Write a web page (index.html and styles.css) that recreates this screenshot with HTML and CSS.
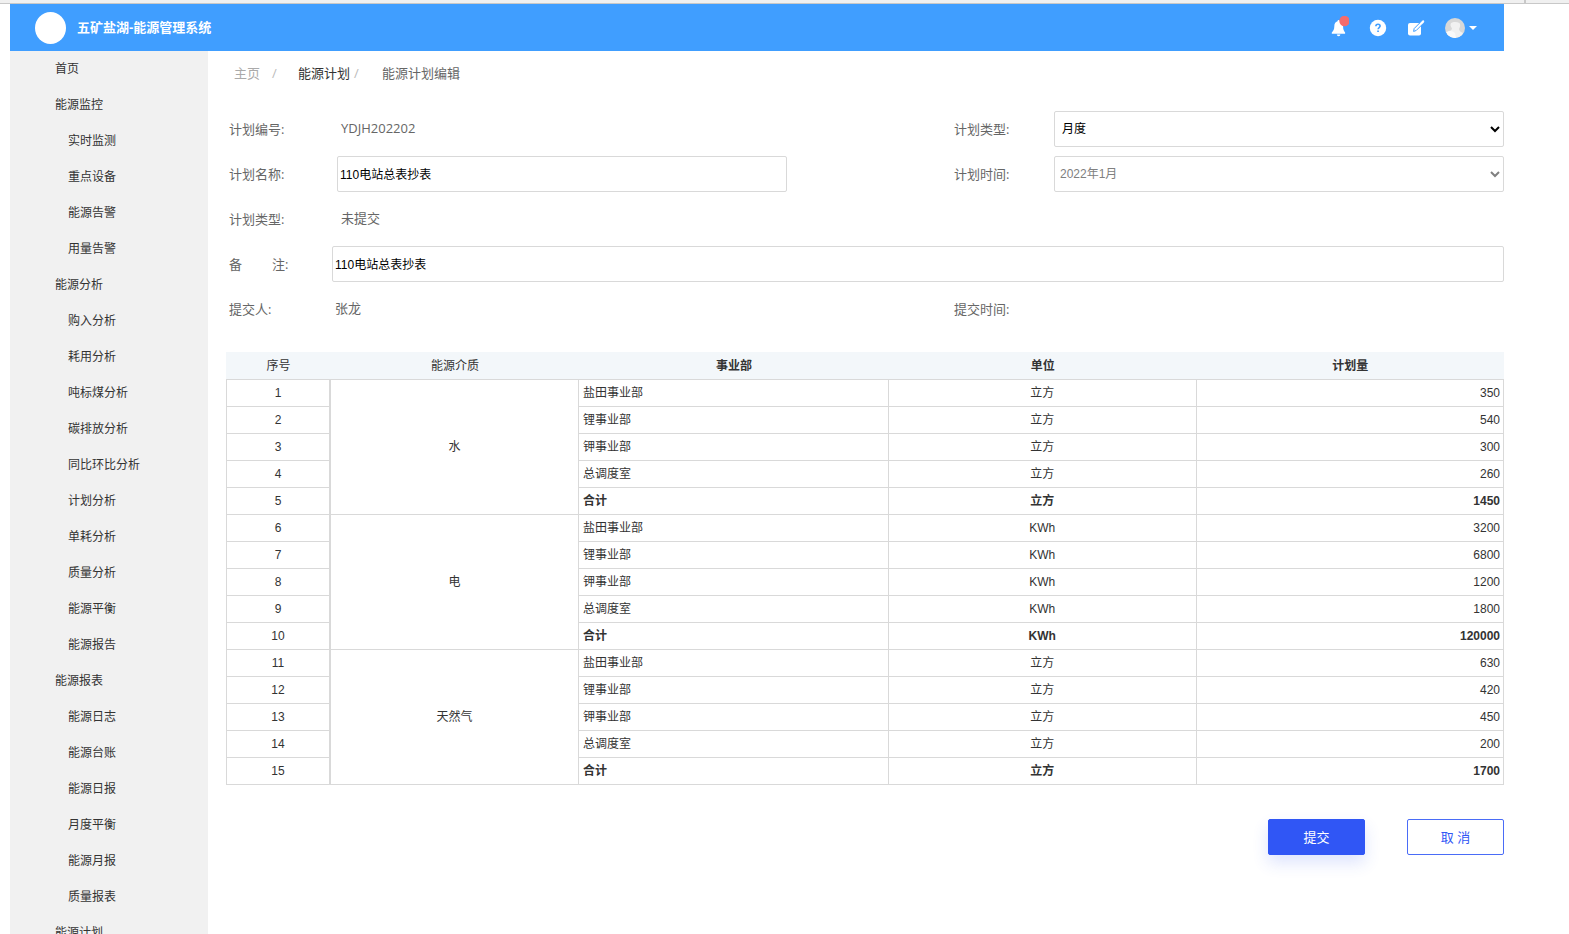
FILE: index.html
```html
<!DOCTYPE html>
<html lang="zh-CN">
<head>
<meta charset="utf-8">
<title>五矿盐湖-能源管理系统</title>
<link rel="stylesheet" href="styles.css">
</head>
<body>
<div class="window-edge"><span class="window-notch"></span></div>
<div class="app">
  <header class="topbar">
    <span class="logo"></span>
    <h1 class="brand">五矿盐湖-能源管理系统</h1>
    <div class="tools">
      <button class="tool" type="button" aria-label="通知">
        <svg width="20" height="24" viewBox="0 0 20 24"><path d="M8.500 5.300a1.200 1.200 0 0 1 2.400 0C13.100 5.900 14.100 7.500 14.100 10.500c0 3.200.7 4.300 2 6v1.300H2.800v-1.300c1.500-1.700 2.500-2.800 2.500-6 0-3 1-4.600 3.200-5.200z" fill="#fff"/><path d="M7.800 18.500h3.600a1.800 1.800 0 0 1-3.600 0z" fill="#fff"/><circle cx="15.500" cy="5" r="5.200" fill="#f56c6c"/></svg>
      </button>
      <button class="tool" type="button" aria-label="帮助">
        <svg width="18" height="18" viewBox="0 0 18 18"><circle cx="9" cy="9" r="8.200" fill="#fff"/><path d="M6.900 7.300c0-1.300.9-2 2.100-2s2.100.7 2.100 1.800c0 1.400-2 1.500-2 3.200" fill="none" stroke="#409eff" stroke-width="1.600"/><path d="M8.200 11.500h1.700v1.600H8.200z" fill="#409eff"/></svg>
      </button>
      <button class="tool" type="button" aria-label="编辑">
        <svg width="18" height="18" viewBox="0 0 18 18"><path d="M3 4h8.600L14 6v8.500a2 2 0 0 1-2 2H3a2 2 0 0 1-2-2V6a2 2 0 0 1 2-2z" fill="#fff"/><path d="M6.600 12.400l.6-2.900 8-8 2 2-8 8z" fill="#fff" stroke="#409eff" stroke-width="1"/><path d="M14 4.600L16.800 1.700" stroke="#fff" stroke-width="1.800"/></svg>
      </button>
      <button class="tool user" type="button" aria-label="用户">
        <svg width="20" height="20" viewBox="0 0 20 20"><defs><clipPath id="face"><circle cx="10" cy="10" r="10"/></clipPath></defs><g clip-path="url(#face)"><path d="M0 0h20v20H0z" fill="#d8d8d8"/><path d="M6 5c2-1.500 6-1.500 8.500 0 1.500 2.500.3 4.300-.5 6 0 2 2 3 4 4l-2 5H2l-1-6c3-1 5.500-1 6-3.500C5.700 8.500 5 7 6 5z" fill="#f1f1f1"/><path d="M2 14c3-2 6-1 8 1l1 5H2z" fill="#fafafa"/></g></svg>
        <svg width="8" height="4" viewBox="0 0 8 4"><path d="M0 0h8L4 4z" fill="#fff"/></svg>
      </button>
    </div>
  </header>
  <div class="body">
    <nav class="sidebar">
      <a href="#">首页</a>
      <a href="#">能源监控</a>
      <a class="sub" href="#">实时监测</a>
      <a class="sub" href="#">重点设备</a>
      <a class="sub" href="#">能源告警</a>
      <a class="sub" href="#">用量告警</a>
      <a href="#">能源分析</a>
      <a class="sub" href="#">购入分析</a>
      <a class="sub" href="#">耗用分析</a>
      <a class="sub" href="#">吨标煤分析</a>
      <a class="sub" href="#">碳排放分析</a>
      <a class="sub" href="#">同比环比分析</a>
      <a class="sub" href="#">计划分析</a>
      <a class="sub" href="#">单耗分析</a>
      <a class="sub" href="#">质量分析</a>
      <a class="sub" href="#">能源平衡</a>
      <a class="sub" href="#">能源报告</a>
      <a href="#">能源报表</a>
      <a class="sub" href="#">能源日志</a>
      <a class="sub" href="#">能源台账</a>
      <a class="sub" href="#">能源日报</a>
      <a class="sub" href="#">月度平衡</a>
      <a class="sub" href="#">能源月报</a>
      <a class="sub" href="#">质量报表</a>
      <a href="#">能源计划</a>
    </nav>
    <main class="main">
      <nav class="crumbs">
        <a class="home" href="#">主页</a><span class="slash first">/</span><a class="parent" href="#">能源计划</a><span class="slash">/</span><span class="current">能源计划编辑</span>
      </nav>
      <form class="form">
        <div class="row">
          <span class="label">计划编号:</span><span class="value">YDJH202202</span>
          <label class="label right" for="type">计划类型:</label>
          <select id="type" class="field type"><option>月度</option></select>
        </div>
        <div class="row">
          <label class="label" for="name">计划名称:</label><input id="name" class="field" type="text" value="110电站总表抄表">
          <label class="label right" for="time">计划时间:</label>
          <select id="time" class="field time" disabled><option>2022年1月</option></select>
        </div>
        <div class="row"><span class="label">计划类型:</span><span class="value">未提交</span></div>
        <div class="row wide">
          <label class="label spread" for="note"><span>备</span><span>注:</span></label><input id="note" class="field" type="text" value="110电站总表抄表">
        </div>
        <div class="row"><span class="label">提交人:</span><span class="value person">张龙</span><span class="label right">提交时间:</span></div>
      </form>
      <table class="plan">
        <colgroup><col class="c-no"><col class="c-kind"><col class="c-dept"><col><col></colgroup>
        <thead><tr><th class="light">序号</th><th class="light">能源介质</th><th>事业部</th><th>单位</th><th>计划量</th></tr></thead>
        <tbody>
          <tr><td class="no">1</td><td rowspan="5">水</td><td class="dept">盐田事业部</td><td>立方</td><td class="num">350</td></tr>
          <tr><td class="no">2</td><td class="dept">锂事业部</td><td>立方</td><td class="num">540</td></tr>
          <tr><td class="no">3</td><td class="dept">钾事业部</td><td>立方</td><td class="num">300</td></tr>
          <tr><td class="no">4</td><td class="dept">总调度室</td><td>立方</td><td class="num">260</td></tr>
          <tr class="total"><td class="no">5</td><td class="dept">合计</td><td>立方</td><td class="num">1450</td></tr>
          <tr><td class="no">6</td><td rowspan="5">电</td><td class="dept">盐田事业部</td><td>KWh</td><td class="num">3200</td></tr>
          <tr><td class="no">7</td><td class="dept">锂事业部</td><td>KWh</td><td class="num">6800</td></tr>
          <tr><td class="no">8</td><td class="dept">钾事业部</td><td>KWh</td><td class="num">1200</td></tr>
          <tr><td class="no">9</td><td class="dept">总调度室</td><td>KWh</td><td class="num">1800</td></tr>
          <tr class="total"><td class="no">10</td><td class="dept">合计</td><td>KWh</td><td class="num">120000</td></tr>
          <tr><td class="no">11</td><td rowspan="5">天然气</td><td class="dept">盐田事业部</td><td>立方</td><td class="num">630</td></tr>
          <tr><td class="no">12</td><td class="dept">锂事业部</td><td>立方</td><td class="num">420</td></tr>
          <tr><td class="no">13</td><td class="dept">钾事业部</td><td>立方</td><td class="num">450</td></tr>
          <tr><td class="no">14</td><td class="dept">总调度室</td><td>立方</td><td class="num">200</td></tr>
          <tr class="total"><td class="no">15</td><td class="dept">合计</td><td>立方</td><td class="num">1700</td></tr>
        </tbody>
      </table>
      <div class="actions">
        <button class="btn primary" type="button">提交</button>
        <button class="btn" type="button">取 消</button>
      </div>
    </main>
  </div>
</div>
</body>
</html>
```
FILE: styles.css
```css
* { box-sizing: border-box; }
body {
  margin: 0;
  height: 100vh;
  display: flex;
  flex-direction: column;
  overflow: hidden;
  background: #fff;
  color: #333;
  font: 12px/18px "Liberation Sans", "Noto Sans CJK SC", sans-serif;
}
a { color: inherit; text-decoration: none; }
.window-edge {
  flex: none;
  height: 4px;
  padding-right: 43px;
  display: flex;
  justify-content: flex-end;
  background: #f0f0f0;
  border-bottom: 1px solid #c8c8c8;
}
.window-notch { width: 2px; background: #c8c8c8; }
.app {
  flex: 1;
  min-height: 0;
  margin: 0 65px 0 10px;
  display: flex;
  flex-direction: column;
}
.topbar {
  flex: none;
  height: 47px;
  padding: 0 27px 0 25px;
  display: flex;
  align-items: center;
  background: #409eff;
  color: #fff;
}
.logo { width: 31px; height: 32px; border-radius: 50%; background: #fff; }
.brand { margin: 0 auto 0 11px; font-size: 13px; line-height: 20px; }
.tools { display: flex; align-items: center; }
.tool {
  display: flex;
  align-items: center;
  margin: 0 0 0 20px;
  padding: 0;
  border: 0;
  background: none;
}
.user { gap: 4px; }
.body { flex: 1; min-height: 0; display: flex; }
.sidebar {
  flex: none;
  width: 198px;
  background: #f1f1f1;
  overflow-y: auto;
  scrollbar-width: none;
}
.sidebar a { display: block; padding-left: 45px; line-height: 36px; }
.sidebar .sub { padding-left: 58px; }
.main {
  flex: 1;
  min-width: 0;
  padding-left: 18px;
  font-family: "Open Sans", "Noto Sans CJK SC", sans-serif;
}
.crumbs {
  display: flex;
  height: 55px;
  padding: 12px 0 0 8px;
  font-size: 13px;
  line-height: 20px;
}
.home { color: #aaa; }
.slash { width: 32px; padding-left: 4px; color: #bbb; }
.slash.first { width: 38px; padding-left: 12px; }
.parent { color: #333; }
.current { color: #666; }
.form { padding-left: 3px; font-size: 13px; line-height: 20px; color: #666; }
.row {
  display: grid;
  grid-template-columns: 108px minmax(0, 1fr) 167px 100px minmax(0, 1fr);
  align-items: center;
  height: 45px;
}
.row.wide { grid-template-columns: 103px minmax(0, 1fr); }
.right { grid-column: 4; }
.spread { display: flex; gap: 30px; }
.value { padding: 0 0 2px 4px; }
.person { margin-left: -6px; }
.field {
  width: 100%;
  height: 36px;
  margin: 0;
  padding: 0 2px;
  border: 1px solid #d9d9d9;
  border-radius: 2px;
  background: #fff;
  color: #000;
  font: 12px/18px "Liberation Sans", "Noto Sans CJK SC", sans-serif;
}
select.type { padding: 0 0 0 3px; }
select.time { padding: 0 0 0 1px; color: #808080; opacity: 1; }
.plan {
  width: 100%;
  margin-top: 21px;
  table-layout: fixed;
  border-collapse: separate;
  border-spacing: 0;
  font: 12px/18px "Liberation Sans", "Noto Sans CJK SC", sans-serif;
}
.c-no { width: 105px; }
.c-kind { width: 248px; }
.c-dept { width: 310px; }
.plan th, .plan td { height: 27px; padding: 0 4px; text-align: center; }
.plan th { height: 28px; background: #f3f7fa; border-bottom: 1px solid #d9d9d9; }
.plan .light { font-weight: normal; }
.plan td { border-right: 1px solid #d9d9d9; border-bottom: 1px solid #d9d9d9; }
.plan .no { border-left: 1px solid #d9d9d9; border-right-width: 2px; }
.plan .dept { text-align: left; }
.plan .num { padding-right: 3px; text-align: right; }
.total td { font-weight: bold; }
.total .no { font-weight: normal; }
.actions { display: flex; justify-content: flex-end; gap: 42px; margin-top: 34px; }
.btn {
  width: 97px;
  height: 36px;
  padding: 0;
  border: 1px solid #4a6cf7;
  border-radius: 2px;
  background: #fff;
  color: #3056f5;
  font: 13px/20px "Open Sans", "Noto Sans CJK SC", sans-serif;
}
.primary {
  border-color: #3056f5;
  background: #3056f5;
  color: #fff;
  box-shadow: 0 8px 16px rgba(48, 86, 245, 0.16);
}
```
